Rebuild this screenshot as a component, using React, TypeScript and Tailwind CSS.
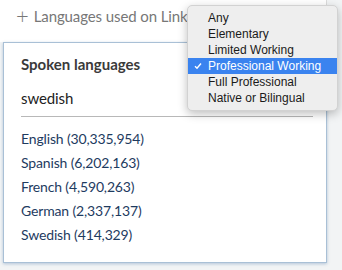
const levels = [
  'Any',
  'Elementary',
  'Limited Working',
  'Professional Working',
  'Full Professional',
  'Native or Bilingual',
]

const results = [
  'English (30,335,954)',
  'Spanish (6,202,163)',
  'French (4,590,263)',
  'German (2,337,137)',
  'Swedish (414,329)',
]

export default function App() {
  return (
    <div
      className="relative w-[342px] h-[270px] overflow-hidden bg-[#f2f4f5]"
      style={{ fontFamily: 'Lato, "Open Sans", sans-serif' }}
    >
      <div className="w-[327px] border-r border-[#dcdcdc] bg-white">
        <div className="flex items-center h-[42px] pl-[16px] pb-[9px] text-[15px] tracking-[-0.1px] text-[#777]">
          <span className="text-[22px] leading-none font-light mr-[5px] -mt-[2px]">+</span>
          <span>Languages used on LinkedIn</span>
        </div>
      </div>

      <div className="ml-[3px] w-[324px] h-[221px] bg-white border border-[#a9c0d6] shadow-[0_1px_3px_rgba(60,110,160,0.35)] px-[17px] pt-[10px]">
        <div className="text-[15px] font-bold text-[#3a3a3a] h-[22px] leading-[22px]">
          Spoken languages
        </div>
        <div className="mt-[13px] text-[15px] tracking-[-0.1px] text-[#222] leading-[20px] pb-[8px] border-b border-[#b8b8b8] mr-[-4px]">
          swedish
        </div>
        <ul className="mt-[10px] flex flex-col">
          {results.map((r) => (
            <li
              key={r}
              className="h-[24px] leading-[24px] text-[14px] tracking-[-0.15px] text-[#1e3b5f]"
            >
              {r}
            </li>
          ))}
        </ul>
      </div>

      <div
        className="absolute left-[187px] top-[5px] w-[151px] rounded-[5px] bg-[#eeeeee] border border-[#d2d2d2] shadow-[0_3px_10px_rgba(0,0,0,0.25)] py-[4px]"
        style={{ fontFamily: '"Liberation Sans", Arial, sans-serif' }}
      >
        {levels.map((l) => {
          const sel = l === 'Professional Working'
          return (
            <div
              key={l}
              className={
                sel
                  ? 'relative h-[16px] leading-[16px] pl-[20px] text-[12px] bg-[#3a83ef] text-white'
                  : 'relative h-[16px] leading-[16px] pl-[20px] text-[12px] text-[#1a1a1a]'
              }
            >
              {sel && (
                <svg
                  className="absolute left-[6px] top-[4px]"
                  width="8"
                  height="8"
                  viewBox="0 0 8 8"
                  fill="none"
                  stroke="white"
                  strokeWidth="1.4"
                >
                  <path d="M1 4.2 L3 6.2 L7 1.5" />
                </svg>
              )}
              {l}
            </div>
          )
        })}
      </div>
    </div>
  )
}
